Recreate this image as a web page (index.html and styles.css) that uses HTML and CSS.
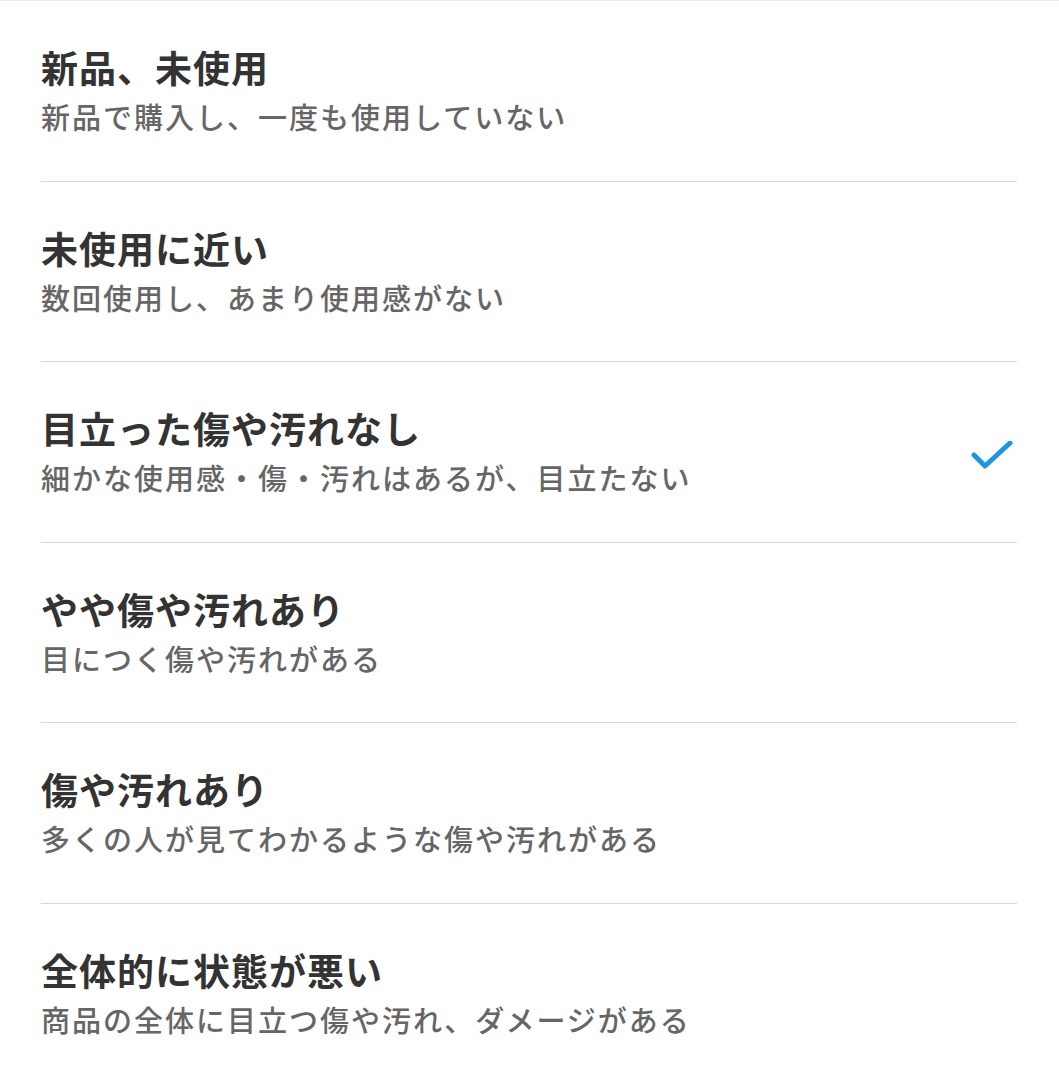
FILE: index.html
```html
<!DOCTYPE html>
<html lang="ja">
<head>
  <meta charset="UTF-8" />
  <meta name="viewport" content="width=device-width, initial-scale=1.0" />
  <title>商品の状態</title>
  <link rel="stylesheet" href="styles.css">
</head>
<body>
  <ul class="conditions">
    <li class="condition">
      <div class="text">
        <div class="title">新品、未使用</div>
        <div class="desc">新品で購入し、一度も使用していない</div>
      </div>
    </li>
    <li class="condition">
      <div class="text">
        <div class="title">未使用に近い</div>
        <div class="desc">数回使用し、あまり使用感がない</div>
      </div>
    </li>
    <li class="condition selected">
      <div class="text">
        <div class="title">目立った傷や汚れなし</div>
        <div class="desc">細かな使用感・傷・汚れはあるが、目立たない</div>
      </div>
      <svg class="check" width="44" height="34" viewBox="0 0 44 34">
        <path d="M4 14 L15 25 L40 2" fill="none" stroke="#1e96e6" stroke-width="5" stroke-linecap="round" stroke-linejoin="round" />
      </svg>
    </li>
    <li class="condition">
      <div class="text">
        <div class="title">やや傷や汚れあり</div>
        <div class="desc">目につく傷や汚れがある</div>
      </div>
    </li>
    <li class="condition">
      <div class="text">
        <div class="title">傷や汚れあり</div>
        <div class="desc">多くの人が見てわかるような傷や汚れがある</div>
      </div>
    </li>
    <li class="condition">
      <div class="text">
        <div class="title">全体的に状態が悪い</div>
        <div class="desc">商品の全体に目立つ傷や汚れ、ダメージがある</div>
      </div>
    </li>
  </ul>
</body>
</html>
```

FILE: styles.css
```css
body {
  margin: 0;
  background: #fff;
  font-family: "Noto Sans CJK JP", "Noto Sans", sans-serif;
  border-top: 1px solid #ececec;
}

.conditions {
  list-style: none;
  margin: 0 42px 0 41px;
  padding: 0;
}

.condition {
  display: flex;
  align-items: center;
  justify-content: space-between;
  padding: 42px 0 44.5px;
  border-bottom: 1px solid #d9d9d9;
}

.condition:last-child {
  border-bottom: none;
}

.title {
  font-size: 37px;
  line-height: 48px;
  font-weight: 700;
  color: #333;
  letter-spacing: 1px;
}

.desc {
  margin-top: 5px;
  font-size: 29px;
  line-height: 40px;
  font-weight: 500;
  color: #666;
  letter-spacing: 2px;
}

.check {
  margin: 14px 3px 0 0;
}
```
